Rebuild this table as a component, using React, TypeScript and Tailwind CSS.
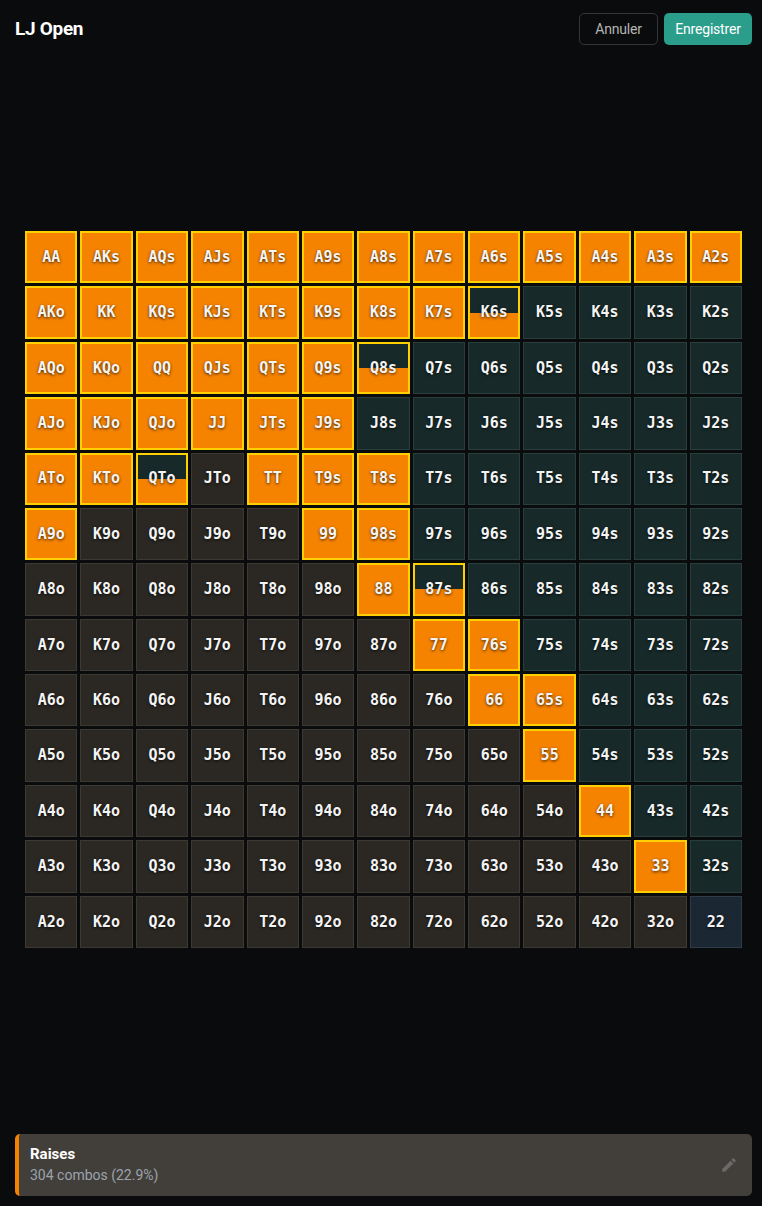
import { MdEdit } from 'react-icons/md';

const RANKS = ['A', 'K', 'Q', 'J', 'T', '9', '8', '7', '6', '5', '4', '3', '2'];

// fraction of each hand in the raise range (1 = full)
const RAISE: Record<string, number> = {
    AA: 1, AKs: 1, AQs: 1, AJs: 1, ATs: 1, A9s: 1, A8s: 1, A7s: 1, A6s: 1, A5s: 1, A4s: 1, A3s: 1, A2s: 1,
    AKo: 1, KK: 1, KQs: 1, KJs: 1, KTs: 1, K9s: 1, K8s: 1, K7s: 1, K6s: 0.5,
    AQo: 1, KQo: 1, QQ: 1, QJs: 1, QTs: 1, Q9s: 1, Q8s: 0.5,
    AJo: 1, KJo: 1, QJo: 1, JJ: 1, JTs: 1, J9s: 1,
    ATo: 1, KTo: 1, QTo: 0.5, TT: 1, T9s: 1, T8s: 1,
    A9o: 1, '99': 1, '98s': 1,
    '88': 1, '87s': 0.5,
    '77': 1, '76s': 1,
    '66': 1, '65s': 1,
    '55': 1,
    '44': 1,
    '33': 1,
};

function handName(r: number, c: number) {
    if (r === c) return RANKS[r] + RANKS[c];
    if (c > r) return RANKS[r] + RANKS[c] + 's';
    return RANKS[c] + RANKS[r] + 'o';
}

function Cell({ r, c }: { r: number; c: number }) {
    const name = handName(r, c);
    const freq = RAISE[name] ?? 0;
    const base = r === c ? 'bg-[#1c2734] border-[#2e3b4a]' : c > r ? 'bg-[#172a29] border-[#283e3c]' : 'bg-[#2b2823] border-[#3c3832]';
    const selected = freq > 0;

    return (
        <div
            className={`relative aspect-square flex items-center justify-center overflow-hidden border ${
                selected ? 'border-2 border-[#ffd000] bg-[#172a29]' : base
            } ${freq === 1 ? 'bg-[#f68300]' : ''}`}
        >
            {selected && freq < 1 && (
                <div className="absolute inset-x-0 bottom-0 bg-[#f68300]" style={{ height: `${freq * 100}%` }} />
            )}
            <span className="relative font-['DejaVu_Sans_Mono',monospace] font-bold text-[15px] text-[#f4f4f4] [text-shadow:0_1px_3px_rgba(0,0,0,0.75)]">
                {name}
            </span>
        </div>
    );
}

export default function App() {
    return (
        <div className="min-h-[1206px] h-[1206px] flex flex-col bg-[#0a0b0d] font-['Roboto',sans-serif]">
            <div className="flex items-center justify-between pr-[10px] pl-[15px] pt-[13px] h-[45px]">
                <h1 className="text-[19px] font-bold text-white tracking-[-0.3px]">LJ Open</h1>
                <div className="flex items-center gap-[6px]">
                    <button className="h-8 w-[79px] rounded-[5px] border border-[#34363a] text-[14px] text-[#b5b5b5] tracking-[-0.2px]">
                        Annuler
                    </button>
                    <button className="h-8 w-[88px] rounded-[5px] bg-[#2a9d8b] text-[14px] text-white tracking-[-0.2px]">
                        Enregistrer
                    </button>
                </div>
            </div>

            <div className="flex-1 flex items-center pl-[25px] pr-[20px]">
                <div className="w-[717px] grid grid-cols-13 gap-[3px]">
                    {RANKS.map((_, r) => RANKS.map((_, c) => <Cell key={`${r}-${c}`} r={r} c={c} />))}
                </div>
            </div>

            <div className="pr-[10px] pl-[15px] pb-[10px]">
                <div className="flex items-center justify-between h-[62px] rounded-[5px] bg-[#423f3a] border-l-[4px] border-[#f68300] pl-[11px] pr-[14px]">
                    <div className="flex flex-col gap-[3px]">
                        <span className="text-[15px] font-bold text-white leading-tight">Raises</span>
                        <span className="text-[14px] text-[#9ba3ae] leading-tight">304 combos (22.9%)</span>
                    </div>
                    <MdEdit className="text-[#6a6a6a] w-[18px] h-[18px]" />
                </div>
            </div>
        </div>
    );
}
